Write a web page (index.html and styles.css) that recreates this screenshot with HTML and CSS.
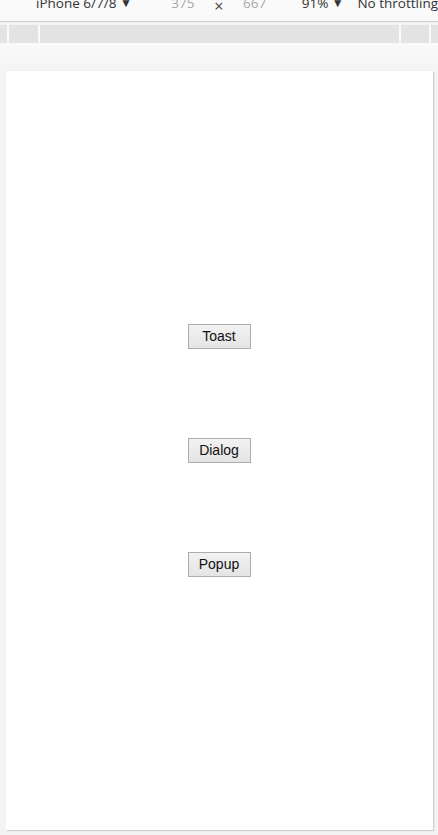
FILE: index.html
```html
<!DOCTYPE html>
<html>
<head>
<meta charset="utf-8">
<link rel="stylesheet" href="styles.css">
</head>
<body>
<div class="toolbar">
  <div class="tb-row">
    <span class="device-name">iPhone 6/7/8 <span class="caret">▼</span></span>
    <span class="dim">375</span>
    <span class="times">×</span>
    <span class="dim">667</span>
    <span class="zoom">91% <span class="caret">▼</span></span>
    <span class="throttle">No throttling</span>
  </div>
</div>
<div class="ruler">
  <div class="seg s1"></div>
  <div class="seg s2"></div>
  <div class="seg s3"></div>
  <div class="seg s4"></div>
  <div class="seg s5"></div>
</div>
<div class="stage">
  <div class="device">
    <button class="btn">Toast</button>
    <button class="btn">Dialog</button>
    <button class="btn">Popup</button>
  </div>
</div>
</body>
</html>
```
FILE: styles.css
```css
html, body {
  margin: 0;
  padding: 0;
}
body {
  width: 438px;
  height: 835px;
  overflow: hidden;
  background: #f3f3f3;
  font-family: "Open Sans", "Liberation Sans", sans-serif;
}
.toolbar {
  height: 21px;
  background: #fafafa;
  border-bottom: 1px solid #cbcbcb;
  overflow: hidden;
}
.tb-row {
  display: flex;
  align-items: center;
  height: 20px;
  margin-top: -7px;
  padding-left: 36px;
  font-size: 13.5px;
  color: #333;
  white-space: nowrap;
}
.caret {
  font-size: 12px;
  position: relative;
  top: -1px;
}
.dim {
  color: #a8a8a8;
}
.device-name { width: 136px; }
.dim:nth-of-type(2) { width: 43px; }
.times {
  width: 29px;
  position: relative;
  top: 3px;
  font-size: 16px;
  color: #444;
}
.dim:nth-of-type(4) { width: 59px; }
.zoom { width: 56px; }
.ruler {
  display: flex;
  height: 18px;
  margin-top: 3px;
  background: #fafafa;
  gap: 2px;
}
.seg {
  background: #e3e3e3;
}
.s1 { width: 7px; }
.s2 { width: 29px; }
.s3 { width: 359px; }
.s4 { width: 28px; }
.s5 { flex: 1; }
.stage {
  height: 792px;
  padding: 28px 0 0 6px;
  box-sizing: border-box;
  background: linear-gradient(#fafafa, #f3f3f3 30px);
}
.device {
  width: 427px;
  height: 759px;
  background: #fff;
  box-shadow: 1px 1px 1px rgba(0,0,0,0.15);
  display: flex;
  flex-direction: column;
  align-items: center;
  padding-top: 253px;
  box-sizing: border-box;
  gap: 89px;
}
.btn {
  width: 63px;
  height: 25px;
  margin: 0;
  margin-left: -1px;
  padding: 0 0 1px;
  border: 1px solid #adadad;
  border-radius: 0;
  background: linear-gradient(#f2f2f2, #e4e4e4);
  font-family: "Liberation Sans", Arial, sans-serif;
  font-size: 14px;
  color: #111;
}
```
